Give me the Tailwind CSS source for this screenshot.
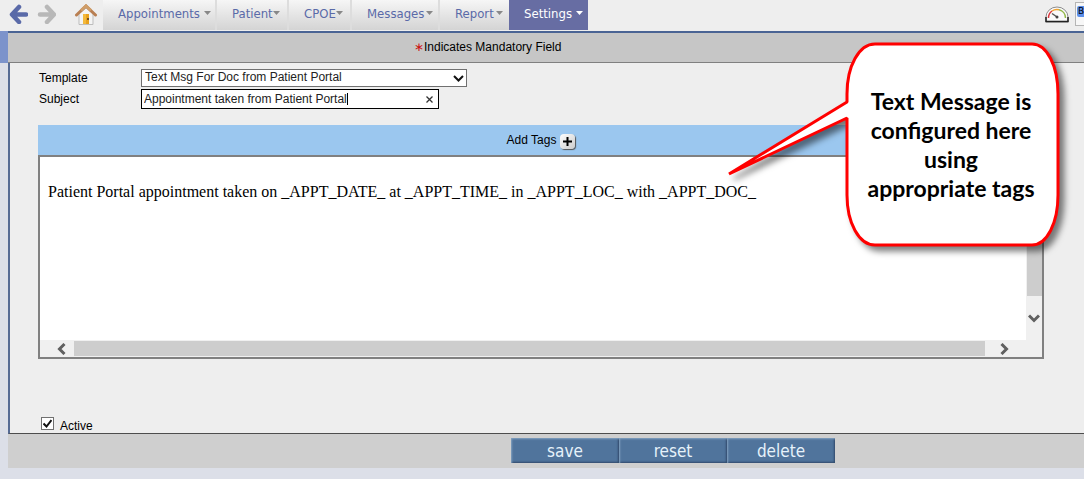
<!DOCTYPE html>
<html lang="en">
<head>
    <meta charset="UTF-8">
    <meta name="viewport" content="width=device-width, initial-scale=1.0">
    <title>Settings - Text Message Template</title>
    <script src="https://cdn.jsdelivr.net/npm/@tailwindcss/browser@4"></script>
</head>
<body class="relative min-h-screen overflow-x-hidden bg-[#dcdfe8] font-['Liberation_Sans',sans-serif] text-xs text-black">

    <!-- Top navigation -->
    <header class="flex h-[31px] items-start bg-[#eeeeee]">
        <div class="flex w-[103px] shrink-0 items-start pt-1">
            <a href="#" aria-label="Back" class="ml-2">
                <svg class="h-5 w-5" viewBox="0 0 20 20" fill="none" stroke="#5a6aa8" stroke-width="4.500" stroke-linecap="round" stroke-linejoin="round">
                    <path d="M11 3 L4 10.500 L11 18 M5 10.500 H18" />
                </svg>
            </a>
            <a href="#" aria-label="Forward" class="ml-2">
                <svg class="h-5 w-5" viewBox="0 0 20 20" fill="none" stroke="#b8b8b8" stroke-width="4.500" stroke-linecap="round" stroke-linejoin="round">
                    <path d="M11 3 L18 10.500 L11 18 M17 10.500 H4" />
                </svg>
            </a>
            <a href="#" aria-label="Home" class="ml-[18px]">
                <svg class="h-[22px] w-6" viewBox="0 0 24 22">
                    <path d="M5 10 L12 4 L19 10 V20.500 H5 Z" fill="#f4f4f4" stroke="#bdbdbd" />
                    <rect x="9" y="10" width="6" height="10" fill="#e9a21e" />
                    <rect x="9" y="10" width="3" height="10" fill="#f3b93c" />
                    <rect x="13" y="14" width="2" height="2" fill="#75501a" />
                    <path d="M2.500 11 L12 2 L21.500 11" fill="none" stroke="#b97f52" stroke-width="3" stroke-linecap="round" />
                    <path d="M7 6.500 L12 2 L17 6.500" fill="none" stroke="#cf9d68" stroke-width="3" />
                </svg>
            </a>
        </div>

        <nav class="flex h-[30px] flex-1 font-['DejaVu_Sans_Condensed','DejaVu_Sans',sans-serif] text-[13px] leading-[27px] text-[#5a6aa8]">
            <a href="#" class="flex w-[114px] items-start gap-1 border-r-2 border-[#dddddd] bg-linear-to-b from-[#f6f6f6] to-[#d4d4d4] pl-[15px]">Appointments
                <svg class="mt-[11px] h-1 w-[7px]" viewBox="0 0 7 4" fill="#888888"><path d="M0 0 H7 L3.500 4 Z" /></svg>
            </a>
            <a href="#" class="flex w-[72px] items-start border-r-2 border-[#dddddd] bg-linear-to-b from-[#f6f6f6] to-[#d4d4d4] pl-[15px]">Patient
                <svg class="mt-[11px] h-1 w-[7px]" viewBox="0 0 7 4" fill="#888888"><path d="M0 0 H7 L3.500 4 Z" /></svg>
            </a>
            <a href="#" class="flex w-[63px] items-start border-r-2 border-[#dddddd] bg-linear-to-b from-[#f6f6f6] to-[#d4d4d4] pl-[15px]">CPOE
                <svg class="mt-[11px] h-1 w-[7px]" viewBox="0 0 7 4" fill="#888888"><path d="M0 0 H7 L3.500 4 Z" /></svg>
            </a>
            <a href="#" class="flex w-[88px] items-start gap-0.5 border-r-2 border-[#dddddd] bg-linear-to-b from-[#f6f6f6] to-[#d4d4d4] pl-[15px]">Messages
                <svg class="mt-[11px] h-1 w-[7px]" viewBox="0 0 7 4" fill="#888888"><path d="M0 0 H7 L3.500 4 Z" /></svg>
            </a>
            <a href="#" class="flex w-[69px] items-start gap-0.5 bg-linear-to-b from-[#f6f6f6] to-[#d4d4d4] pl-[15px]">Report
                <svg class="mt-[11px] h-1 w-[7px]" viewBox="0 0 7 4" fill="#888888"><path d="M0 0 H7 L3.500 4 Z" /></svg>
            </a>
            <a href="#" aria-current="page" class="flex w-[79px] items-start gap-1 bg-[#676da3] pl-[15px] text-white">Settings
                <svg class="mt-[11px] h-1 w-[7px]" viewBox="0 0 7 4" fill="#ffffff"><path d="M0 0 H7 L3.500 4 Z" /></svg>
            </a>
        </nav>

        <div class="flex shrink-0 items-start gap-1.5">
            <svg class="mt-1.5 h-[17px] w-6" viewBox="0 0 24 17">
                <path d="M1 16 V11 A11 10 0 0 1 23 11 V16 Z" fill="#fafafa" stroke="#8c8c8c" />
                <path d="M1 11 V15.500 H23 V11" fill="none" stroke="#222222" stroke-width="1.500" />
                <path d="M3.500 12 A8.500 8.500 0 0 1 7 5" fill="none" stroke="#d9363c" stroke-width="1.500" />
                <path d="M7 5 A8.500 8.500 0 0 1 14 3.700" fill="none" stroke="#f0a030" stroke-width="1.500" />
                <path d="M14 3.700 A8.500 8.500 0 0 1 20.500 12" fill="none" stroke="#93b84a" stroke-width="1.500" />
                <path d="M7 7.500 L12 11" stroke="#555555" stroke-width="1.500" />
                <circle cx="12" cy="11" r="1.500" fill="#444444" />
            </svg>
            <div class="mt-0.5 h-6 w-[9px] border border-r-0 border-[#b5b5b5] bg-[#f7f7f7] pl-px">
                <div class="mt-[3px] h-[11px] w-[7px] overflow-hidden rounded-l-xs bg-[#5b8fea] pl-px font-['DejaVu_Sans',sans-serif] text-[9px] leading-[11px]">B</div>
            </div>
        </div>
    </header>

    <main>
        <!-- Mandatory field notice -->
        <div class="flex h-8 border-l-8 border-[#7c93cb]">
            <p class="flex-1 border-t-2 border-b border-t-[#4a6494] border-b-[#808080] bg-[#c6c6c6] pl-[406px] leading-7">
                <span class="text-[#cc1111]">∗</span>Indicates Mandatory Field
            </p>
        </div>

        <form id="templateForm" class="ml-2">
            <div class="border-b border-l-2 border-b-[#4d4d4d] border-l-[#566b94] bg-[#eeeeee] pt-1.5 pr-10 pl-7">
                <div class="flex items-center">
                    <label for="template" class="w-[103px] pl-px">Template</label>
                    <div class="relative">
                        <select id="template" name="template" class="block h-[18px] w-[326px] appearance-none border border-[#707070] bg-white pb-0.5 pl-[3px] text-xs leading-[14px] text-[#222222]">
                            <option>Text Msg For Doc from Patient Portal</option>
                        </select>
                        <svg class="pointer-events-none absolute top-1.5 right-[3px] h-[7px] w-[11px]" viewBox="0 0 11 7" fill="none" stroke="#111111" stroke-width="2"><path d="M1 1 L5.500 5.500 L10 1" /></svg>
                    </div>
                </div>
                <div class="mt-0.5 flex items-center">
                    <label for="subject" class="w-[103px] pl-px">Subject</label>
                    <div class="relative">
                        <input id="subject" name="subject" type="text" value="Appointment taken from Patient Portal" class="block h-5 w-[298px] border border-black bg-white pl-0.5 text-xs text-[#222222]">
                        <span class="absolute top-1 left-[206px] h-3 w-px bg-black"></span>
                        <button type="button" aria-label="Clear subject" class="absolute top-[7px] right-[6px]">
                            <svg class="h-[7px] w-[7px]" viewBox="0 0 7 7" stroke="#333333" stroke-width="1.300"><path d="M0.500 0.500 L6.500 6.500 M6.500 0.500 L0.500 6.500" /></svg>
                        </button>
                    </div>
                </div>

                <!-- Message editor -->
                <div class="mt-4 flex h-[30px] items-center justify-center gap-1 bg-[#9bc7ef]">
                    <span>Add Tags</span>
                    <button type="button" aria-label="Add tag" class="mt-0.5 flex h-[15px] w-[15px] items-center justify-center rounded-sm bg-linear-to-br from-white to-[#cccccc] shadow-[1px_1px_1px_#555555]">
                        <svg class="h-[9px] w-[9px]" viewBox="0 0 9 9" stroke="#000000" stroke-width="2"><path d="M4.500 0 V9 M0 4.500 H9" /></svg>
                    </button>
                </div>
                <div class="border-2 border-[#808080] bg-[#f0f0f0]">
                    <div class="flex h-[183px]">
                        <textarea aria-label="Message text" class="flex-1 resize-none overflow-hidden bg-white px-2 pt-[25px] font-['Liberation_Serif',serif] text-base leading-5">Patient Portal appointment taken on _APPT_DATE_ at _APPT_TIME_ in _APPT_LOC_ with _APPT_DOC_</textarea>
                        <div class="flex w-4 flex-col items-end">
                            <div class="mt-4 h-[123px] w-[15px] bg-[#cdcdcd]"></div>
                            <svg class="mt-[18px] mr-0.5 h-[9px] w-3" viewBox="0 0 12 9" fill="none" stroke="#606060" stroke-width="3"><path d="M1 1.500 L6 6.500 L11 1.500" /></svg>
                        </div>
                    </div>
                    <div class="flex h-[17px] items-center">
                        <svg class="ml-[17px] h-3 w-[9px]" viewBox="0 0 9 12" fill="none" stroke="#606060" stroke-width="3"><path d="M7.500 1 L2.500 6 L7.500 11" /></svg>
                        <div class="ml-2 h-[15px] flex-1 bg-[#cdcdcd]"></div>
                        <svg class="mr-[33px] ml-[15px] h-3 w-[9px]" viewBox="0 0 9 12" fill="none" stroke="#606060" stroke-width="3"><path d="M1.500 1 L6.500 6 L1.500 11" /></svg>
                    </div>
                </div>

                <div class="mt-[58px] flex items-start gap-1.5 pl-[3px]">
                    <input id="active" name="active" type="checkbox" checked class="peer h-[13px] w-[13px] appearance-none border border-[#707070] bg-white">
                    <svg class="pointer-events-none invisible mt-0.5 -ml-[17px] h-[9px] w-[9px] peer-checked:visible" viewBox="0 0 9 9" fill="none" stroke="#111111" stroke-width="2"><path d="M0.500 4.500 L3.500 7.500 L8.500 1" /></svg>
                    <label for="active" class="ml-0.5 pt-0.5 leading-[14px]">Active</label>
                </div>
            </div>

            <!-- Actions -->
            <div class="flex h-[34px] items-start bg-[#cfcfcf] pt-1 pl-[503px] font-['DejaVu_Sans_Condensed','DejaVu_Sans',sans-serif] text-[17px] text-[#e6f2fa]">
                <button type="submit" class="h-[25px] w-[108px] bg-[#50749c] leading-6 shadow-[inset_1px_1px_2px_#86a3c2,inset_-1px_-1px_2px_#2c4666]">save</button>
                <button type="reset" class="h-[25px] w-[108px] bg-[#50749c] leading-6 shadow-[inset_1px_1px_2px_#86a3c2,inset_-1px_-1px_2px_#2c4666]">reset</button>
                <button type="button" class="h-[25px] w-[108px] bg-[#50749c] leading-6 shadow-[inset_1px_1px_2px_#86a3c2,inset_-1px_-1px_2px_#2c4666]">delete</button>
            </div>
        </form>
    </main>

    <!-- Callout bubble -->
    <aside class="absolute top-[42px] right-6 h-[205px] w-[334px]">
        <svg class="absolute inset-0 h-full w-full overflow-visible drop-shadow-[5px_5px_3px_rgba(0,0,0,0.5)]" viewBox="0 0 334 205">
            <path d="M121 60 V52 C121 24 133 2 149 2 H306 C321 2 332 24 332 52 V153 C332 181 321 203 306 203 H149 C133 203 121 181 121 153 V76 L3 132 Z" fill="#ffffff" stroke="#ff0000" stroke-width="3" stroke-linejoin="bevel" />
        </svg>
        <p class="relative mr-1 ml-[120px] pt-[45px] text-center font-['Lato',sans-serif] text-[23px] leading-[29px] font-bold">Text Message is<br>configured here<br>using<br>appropriate tags</p>
    </aside>
</body>
</html>
